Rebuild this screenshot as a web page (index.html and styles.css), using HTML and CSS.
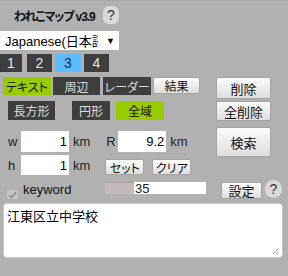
FILE: index.html
```html
<!DOCTYPE html>
<html lang="ja">
<head>
<meta charset="utf-8">
<link rel="stylesheet" href="styles.css">
</head>
<body>
<div class="panel">
  <div class="header">
    <span class="title">われこマップ v3.9</span>
    <span class="help help-top">?</span>
  </div>
  <div class="select"><span class="sel-text">Japanese(日本語)</span><span class="sel-arrow">▼</span></div>
  <div class="tabs">
    <span class="tab tab1">1</span>
    <span class="tab tab2">2</span>
    <span class="tab tab3 active">3</span>
    <span class="tab tab4">4</span>
  </div>
  <div class="controls">
    <div class="left">
      <div class="row mode">
        <span class="btn green b-text">テキスト</span>
        <span class="btn dark b-near">周辺</span>
        <span class="btn dark b-radar">レーダー</span>
        <span class="btn light b-result">結果</span>
      </div>
      <div class="row shape">
        <span class="btn dark b-rect">長方形</span>
        <span class="btn dark b-circle">円形</span>
        <span class="btn green b-all">全域</span>
      </div>
      <div class="row dims">
        <span class="lbl l-w">w</span>
        <span class="inp">1</span>
        <span class="unit">km</span>
        <span class="lbl l-r">R</span>
        <span class="inp">9.2</span>
        <span class="unit">km</span>
      </div>
      <div class="row dims2">
        <span class="lbl l-h">h</span>
        <span class="inp">1</span>
        <span class="unit">km</span>
        <span class="btn light small b-set">セット</span>
        <span class="btn light small b-clear">クリア</span>
      </div>
    </div>
    <div class="right">
      <span class="btn light r-del">削除</span>
      <span class="btn light r-delall">全削除</span>
      <span class="btn light r-search">検索</span>
    </div>
  </div>
  <div class="kwrow">
    <span class="check"><svg width="11" height="10" viewBox="0 0 11 10"><path d="M2 5 L4.5 7.5 L9 2" fill="none" stroke="#8c8c8c" stroke-width="1.6"/></svg></span>
    <span class="kw">keyword</span>
    <span class="slider"><span class="fill"></span><span class="val">35</span></span>
    <span class="btn light b-conf">設定</span>
    <span class="help help-bot">?</span>
  </div>
  <div class="textarea">江東区立中学校<svg class="grip" width="8" height="8" viewBox="0 0 8 8"><path d="M1 7 L7 1 M4 7 L7 4" stroke="#555" stroke-width="1" stroke-dasharray="1 1"/></svg></div>
</div>
</body>
</html>
```
FILE: styles.css
```css
html, body {
  margin: 0;
  padding: 0;
}
body {
  width: 288px;
  height: 276px;
  background: #b1b1b1;
  border-top: 1px solid #a6a6a6;
  box-sizing: border-box;
  font-family: "Liberation Sans", "Noto Sans CJK JP", sans-serif;
  font-feature-settings: "palt";
  overflow: hidden;
}
.panel {
  display: flex;
  flex-direction: column;
}
.header {
  height: 28px;
  display: flex;
  align-items: center;
  padding-left: 14px;
}
.title {
  font-weight: bold;
  font-size: 12px;
  letter-spacing: -1.1px;
  color: #111;
  width: 89px;
  white-space: nowrap;
}
.help {
  background: #dadada;
  color: #333;
  font-size: 14px;
  display: flex;
  align-items: center;
  justify-content: center;
}
.help-top {
  margin-left: 0;
  width: 16px;
  height: 18px;
  border-radius: 6px;
}
.select {
  margin-top: 2px;
  width: 119px;
  height: 19px;
  background: #fff;
  display: flex;
  align-items: center;
  font-size: 13px;
  color: #000;
}
.sel-text {
  width: 93px;
  margin-left: 5px;
  overflow: hidden;
  text-overflow: clip;
  white-space: nowrap;
  font-feature-settings: normal;
}
.sel-arrow {
  margin-left: 8px;
  font-size: 9px;
}
.tabs {
  margin-top: 4px;
  display: flex;
  height: 18px;
}
.tab {
  background: #3e3e3e;
  color: #e6e6e6;
  font-size: 14px;
  display: flex;
  align-items: center;
  justify-content: center;
  width: 25px;
}
.tab1 { width: 22px; }
.tab2 { margin-left: 5px; }
.tab3 { margin-left: 3px; width: 26px; }
.tab4 { margin-left: 3px; }
.tab.active {
  background: #5bbcfc;
  color: #1a2a40;
}
.controls {
  margin-top: 5px;
  display: flex;
}
.left {
  width: 216px;
  display: flex;
  flex-direction: column;
}
.row {
  display: flex;
  align-items: flex-start;
}
.btn {
  display: flex;
  align-items: center;
  justify-content: center;
  font-size: 12px;
  box-sizing: border-box;
  white-space: nowrap;
}
.btn.dark {
  background: #3e3e3e;
  color: #dedede;
}
.btn.green {
  background: #99cc00;
  color: #111;
}
.btn.light {
  background: linear-gradient(#fbfbfb, #dedede);
  border: 1px solid #a3a3a3;
  border-radius: 2px;
  color: #111;
}
.mode { height: 18px; }
.mode .btn { height: 18px; }
.b-text { margin-left: 3px; width: 48px; }
.b-near { margin-left: 2px; width: 47px; }
.b-radar { margin-left: 3px; width: 48px; }
.b-result { margin-left: 2px; width: 47px; height: 17px !important; }
.shape {
  margin-top: 6px;
  height: 19px;
}
.shape .btn { height: 19px; }
.b-rect { margin-left: 8px; width: 47px; }
.b-circle { margin-left: 17px; width: 38px; }
.b-all { margin-left: 6px; width: 48px; }
.dims {
  margin-top: 11px;
  height: 21px;
  align-items: center;
}
.dims2 {
  margin-top: 3px;
  height: 20px;
  align-items: center;
}
.lbl, .unit {
  font-size: 13px;
  color: #222;
}
.l-w { margin-left: 8px; width: 13px; }
.l-h { margin-left: 8px; width: 13px; }
.l-r { margin-left: 16px; width: 12px; }
.unit { margin-left: 4px; }
.inp {
  background: #fff;
  width: 48px;
  box-sizing: border-box;
  font-size: 13px;
  color: #000;
  padding-right: 2px;
  display: flex;
  align-items: center;
  justify-content: flex-end;
}
.dims .inp { height: 21px; }
.dims2 .inp { height: 20px; }
.btn.small {
  height: 16px;
  width: 39px;
  margin-top: 4px;
  font-size: 12px;
}
.b-set { margin-left: 15px; }
.b-clear { margin-left: 8px; }
.right {
  display: flex;
  flex-direction: column;
  width: 55px;
}
.r-del { height: 22px; font-size: 13px; }
.r-delall { margin-top: 2px; height: 20px; font-size: 13px; }
.r-search { margin-top: 6px; height: 30px; font-size: 13px; }
.kwrow {
  margin-top: 5px;
  height: 19px;
  display: flex;
  align-items: flex-start;
}
.check {
  margin-left: 7px;
  margin-top: 10px;
  width: 11px;
  height: 9px;
  background: #c6c6c6;
  border-radius: 2px;
  display: flex;
  overflow: hidden;
}
.kw {
  margin-left: 5px;
  margin-top: 2px;
  font-size: 13px;
  color: #111;
  width: 82px;
}
.slider {
  margin-top: 2px;
  width: 101px;
  height: 12px;
  background: #fff;
  display: flex;
  align-items: center;
  font-size: 13px;
}
.fill {
  width: 29px;
  height: 12px;
  background: #c6b9b9;
  box-sizing: border-box;
  border-top: 1px solid #a99e9e;
}
.val {
  margin-left: 1px;
  color: #222;
}
.b-conf {
  margin-left: 15px;
  margin-top: 2px;
  width: 41px;
  height: 17px;
  font-size: 13px;
}
.help-bot {
  margin-left: 3px;
  width: 17px;
  height: 18px;
  border-radius: 9px;
}
.textarea {
  position: relative;
  margin: 4px 0 0 3px;
  width: 280px;
  height: 55px;
  background: #fff;
  border-radius: 4px;
  border: 1px solid #c9c9c9;
  box-sizing: border-box;
  padding: 2px 3px;
  font-size: 13px;
  color: #000;
}
.grip {
  position: absolute;
  right: 2px;
  bottom: 2px;
}
```
